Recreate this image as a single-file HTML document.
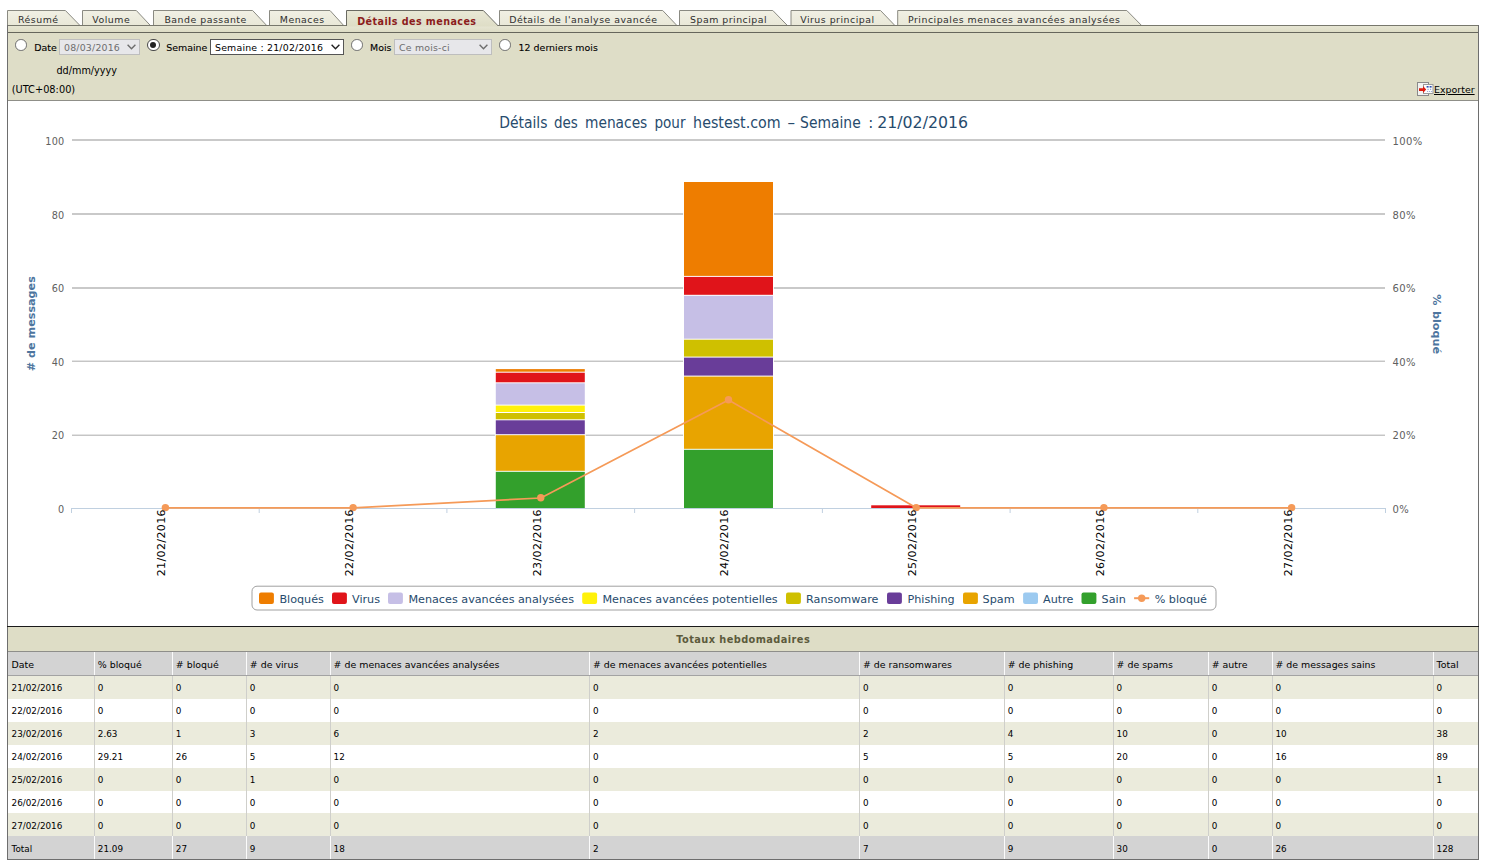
<!DOCTYPE html>
<html lang="fr"><head><meta charset="utf-8"><title>Détails des menaces</title>
<style>
html,body{margin:0;padding:0;background:#fff;}
body{width:1485px;height:861px;overflow:hidden;position:relative;font-family:"DejaVu Sans","Liberation Sans",sans-serif;font-size:9.45px;color:#000;}
.abs{position:absolute;}
.tab{position:absolute;top:13.6px;height:12px;line-height:12px;font-family:"DejaVu Sans","Liberation Sans",sans-serif;font-size:9.4px;letter-spacing:0.5px;color:#2e2e2e;white-space:nowrap;}
.tab.on{font-weight:bold;color:#8c1c1c;font-size:9.6px;letter-spacing:0.42px;top:15.8px;}
.tb{position:absolute;white-space:nowrap;line-height:12px;height:12px;}
.lb{-webkit-text-stroke:0.1px #000;}
.radio{position:absolute;width:9.6px;height:9.6px;border:1px solid #6e6e6e;border-radius:50%;background:#fff;}
.radio.on{border-color:#484848;}
.radio.on:after{content:"";position:absolute;left:2.1px;top:2.1px;width:6.2px;height:6.2px;border-radius:50%;background:#222;}
.sel{position:absolute;top:39px;height:14px;border:1px solid #bebebe;background:#e7e7ea;color:#6d6d6d;line-height:14px;white-space:nowrap;}
.sel.en{background:#fff;border-color:#555;color:#000;}
.sel span{position:absolute;left:4px;top:1.3px;font-size:9.4px;letter-spacing:0.2px;}
.sel svg{position:absolute;right:3.0px;top:3.6px;}
.th,.td{position:absolute;white-space:nowrap;line-height:12px;height:12px;}
.th{font-size:9.42px;}
.td{font-size:8.8px;}
</style></head>
<body>
<div class="abs" style="left:8px;top:26px;width:1470px;height:6px;background:linear-gradient(#e6e5d3,#dddcc5)"></div>
<div class="abs" style="left:8px;top:33px;width:1470px;height:67px;background:#deddc7"></div>
<div class="abs" style="left:8px;top:627px;width:1470px;height:24px;background:#deddc6"></div>
<svg class="abs" style="left:0;top:0" width="1485" height="110" viewBox="0 0 1485 110"><defs><linearGradient id="tg" x1="0" y1="0" x2="0" y2="1"><stop offset="0" stop-color="#f1f0e4"/><stop offset="1" stop-color="#e9e8d8"/></linearGradient><linearGradient id="ta" x1="0" y1="0" x2="0" y2="1"><stop offset="0" stop-color="#e9e8d6"/><stop offset="1" stop-color="#deddc6"/></linearGradient></defs><path d="M7.5 25.5 L7.5 10.5 L65.4 10.5 L80 25.5 Z" fill="url(#tg)" stroke="#8a8a82" stroke-width="1"/><path d="M82.5 25.5 L82.5 10.5 L136.3 10.5 L150.4 25.5 Z" fill="url(#tg)" stroke="#8a8a82" stroke-width="1"/><path d="M153.5 25.5 L153.5 10.5 L252.6 10.5 L266.7 25.5 Z" fill="url(#tg)" stroke="#8a8a82" stroke-width="1"/><path d="M269.5 25.5 L269.5 10.5 L330 10.5 L343.7 25.5 Z" fill="url(#tg)" stroke="#8a8a82" stroke-width="1"/><path d="M499.5 25.5 L499.5 10.5 L662.7 10.5 L676.9 25.5 Z" fill="url(#tg)" stroke="#8a8a82" stroke-width="1"/><path d="M679.5 25.5 L679.5 10.5 L772.8 10.5 L787.4 25.5 Z" fill="url(#tg)" stroke="#8a8a82" stroke-width="1"/><path d="M791.0 25.5 L791.0 10.5 L880.5 10.5 L894.9 25.5 Z" fill="url(#tg)" stroke="#8a8a82" stroke-width="1"/><path d="M897.7 25.5 L897.7 10.5 L1126.8 10.5 L1141.6 25.5 Z" fill="url(#tg)" stroke="#8a8a82" stroke-width="1"/><path d="M7 25.5 H1478.5" stroke="#77776c" stroke-width="1" fill="none"/><path d="M346.5 26.5 L346.5 10.5 L483.3 10.5 L498.3 26.5 Z" fill="url(#ta)" stroke="none"/><path d="M346.5 26 L346.5 10.5 L483.3 10.5 L497.8 25.5" fill="none" stroke="#6a6a62" stroke-width="1"/><path d="M7 32.5 H1478.5" stroke="#66665c" stroke-width="1" fill="none"/><path d="M7 100.5 H1478.5" stroke="#8f8f88" stroke-width="1" fill="none"/></svg>
<div class="abs" style="left:7px;top:25px;width:1px;height:834px;background:#6e6e6e"></div>
<div class="abs" style="left:1478px;top:25px;width:1px;height:834px;background:#6e6e6e"></div>
<div class="tab" style="left:18px">Résumé</div>
<div class="tab" style="left:92.3px">Volume</div>
<div class="tab" style="left:164.4px">Bande passante</div>
<div class="tab" style="left:279.8px">Menaces</div>
<div class="tab on" style="left:357.2px">Détails des menaces</div>
<div class="tab" style="left:509.2px">Détails de l'analyse avancée</div>
<div class="tab" style="left:690px">Spam principal</div>
<div class="tab" style="left:800.2px">Virus principal</div>
<div class="tab" style="left:908.0px">Principales menaces avancées analysées</div>
<div class="radio" style="left:15.2px;top:39.4px"></div>
<div class="tb lb" style="left:34.2px;top:42.0px">Date</div>
<div class="sel" style="left:59px;width:79px"><span>08/03/2016</span><svg width="9" height="6" viewBox="0 0 9 6"><path d="M0.6 0.8 L4.5 4.8 L8.4 0.8" fill="none" stroke="#6d6d6d" stroke-width="1.4"/></svg></div>
<div class="radio on" style="left:147.2px;top:39.0px;width:10.4px;height:10.4px"></div>
<div class="tb lb" style="left:166.2px;top:42.0px">Semaine</div>
<div class="sel en" style="left:210px;width:132px"><span>Semaine : 21/02/2016</span><svg width="9" height="6" viewBox="0 0 9 6"><path d="M0.6 0.8 L4.5 4.8 L8.4 0.8" fill="none" stroke="#222" stroke-width="1.4"/></svg></div>
<div class="radio" style="left:351.2px;top:39.2px"></div>
<div class="tb lb" style="left:370px;top:42.0px">Mois</div>
<div class="sel" style="left:394px;width:96px"><span>Ce mois-ci</span><svg width="9" height="6" viewBox="0 0 9 6"><path d="M0.6 0.8 L4.5 4.8 L8.4 0.8" fill="none" stroke="#6d6d6d" stroke-width="1.4"/></svg></div>
<div class="radio" style="left:499.2px;top:39.2px"></div>
<div class="tb lb" style="left:518.6px;top:42.0px">12 derniers mois</div>
<div class="tb" style="left:56.4px;top:65.4px;font-size:9.7px">dd/mm/yyyy</div>
<div class="tb" style="left:11.7px;top:84.3px;font-size:9.8px">(UTC+08:00)</div>
<svg class="abs" style="left:1417px;top:82px" width="17" height="14" viewBox="0 0 17 14">
<rect x="0.5" y="0.5" width="11" height="13" fill="#f2f2f0" stroke="#8a8a8a"/>
<rect x="6.5" y="2.5" width="9.5" height="9" fill="#fdfdfd" stroke="#9a9a9a"/>
<path d="M2 6.2 H6 V4 L9.2 7.5 L6 10.9 V8.9 H2 Z" fill="#dd1c10"/>
<rect x="9.6" y="4" width="2" height="1.6" fill="#2a50b0"/><rect x="12.6" y="4" width="2" height="1.6" fill="#2a50b0"/>
<rect x="10.5" y="6.8" width="1.2" height="1" fill="#7d93c8"/><rect x="13" y="6.8" width="1.2" height="1" fill="#7d93c8"/>
<rect x="10" y="9" width="1.2" height="1" fill="#9fb0d8"/><rect x="12" y="9" width="1.2" height="1" fill="#9fb0d8"/><rect x="14" y="9" width="1.2" height="1" fill="#9fb0d8"/>
</svg>
<div class="tb" style="left:1434px;top:84.3px;font-size:9.45px;text-decoration:underline;">Exporter</div>
<svg class="abs" style="left:0;top:0" width="1485" height="861" viewBox="0 0 1485 861" font-family="DejaVu Sans, Liberation Sans, sans-serif">
<text y="127.7" font-size="15" fill="#274b6d"><tspan x="499.2" textLength="48.3" lengthAdjust="spacingAndGlyphs">Détails</tspan> <tspan x="553.9" textLength="23.9" lengthAdjust="spacingAndGlyphs">des</tspan> <tspan x="585.0" textLength="62.3" lengthAdjust="spacingAndGlyphs">menaces</tspan> <tspan x="654.4" textLength="31.1" lengthAdjust="spacingAndGlyphs">pour</tspan> <tspan x="693.1" textLength="87.6" lengthAdjust="spacingAndGlyphs">hestest.com</tspan> <tspan x="787.5">–</tspan> <tspan x="800.1" textLength="60.6" lengthAdjust="spacingAndGlyphs">Semaine</tspan> <tspan x="868.3">:</tspan> <tspan x="877.2" textLength="90.9" lengthAdjust="spacingAndGlyphs">21/02/2016</tspan></text>
<rect x="72" y="139" width="1313.0" height="2" fill="#c9c9c9"/>
<rect x="72" y="213" width="1313.0" height="2" fill="#c9c9c9"/>
<rect x="72" y="287" width="1313.0" height="2" fill="#c9c9c9"/>
<rect x="72" y="360" width="1313.0" height="1" fill="#e4e4e4"/><rect x="72" y="361" width="1313.0" height="1" fill="#c5c5c5"/>
<rect x="72" y="434" width="1313.0" height="1" fill="#e4e4e4"/><rect x="72" y="435" width="1313.0" height="1" fill="#c5c5c5"/>
<rect x="71.0" y="508" width="1315.0" height="1" fill="#c0d0e0"/>
<rect x="71.0" y="508" width="1" height="5" fill="#c0d0e0"/>
<rect x="258.7" y="508" width="1" height="5" fill="#c0d0e0"/>
<rect x="446.4" y="508" width="1" height="5" fill="#c0d0e0"/>
<rect x="634.1" y="508" width="1" height="5" fill="#c0d0e0"/>
<rect x="821.9" y="508" width="1" height="5" fill="#c0d0e0"/>
<rect x="1009.6" y="508" width="1" height="5" fill="#c0d0e0"/>
<rect x="1197.3" y="508" width="1" height="5" fill="#c0d0e0"/>
<rect x="1385.0" y="508" width="1" height="5" fill="#c0d0e0"/>
<text x="64.4" y="144.9" text-anchor="end" font-size="9.7" letter-spacing="0.2" fill="#606060">100</text>
<text x="1392.6" y="144.9" text-anchor="start" font-size="10" letter-spacing="0.35" fill="#606060">100%</text>
<text x="64.4" y="218.8" text-anchor="end" font-size="9.7" letter-spacing="0.2" fill="#606060">80</text>
<text x="1392.6" y="218.8" text-anchor="start" font-size="10" letter-spacing="0.35" fill="#606060">80%</text>
<text x="64.4" y="291.8" text-anchor="end" font-size="9.7" letter-spacing="0.2" fill="#606060">60</text>
<text x="1392.6" y="291.8" text-anchor="start" font-size="10" letter-spacing="0.35" fill="#606060">60%</text>
<text x="64.4" y="365.6" text-anchor="end" font-size="9.7" letter-spacing="0.2" fill="#606060">40</text>
<text x="1392.6" y="365.6" text-anchor="start" font-size="10" letter-spacing="0.35" fill="#606060">40%</text>
<text x="64.4" y="439.2" text-anchor="end" font-size="9.7" letter-spacing="0.2" fill="#606060">20</text>
<text x="1392.6" y="439.2" text-anchor="start" font-size="10" letter-spacing="0.35" fill="#606060">20%</text>
<text x="64.4" y="512.9" text-anchor="end" font-size="9.7" letter-spacing="0.2" fill="#606060">0</text>
<text x="1392.6" y="512.9" text-anchor="start" font-size="10" letter-spacing="0.35" fill="#606060">0%</text>
<text transform="translate(35.0,323.7) rotate(-90)" text-anchor="middle" font-size="11.2" font-weight="bold" fill="#4d759e"># de messages</text>
<text transform="translate(1432.8,324.1) rotate(90)" text-anchor="middle" font-size="11.2" word-spacing="1.7" font-weight="bold" fill="#4d759e">% bloqué</text>
<rect x="494.89" y="367.80" width="90.80" height="140.20" fill="#fff"/>
<rect x="495.79" y="369.10" width="89.00" height="2.60" fill="#ee7d00"/>
<rect x="495.79" y="372.70" width="89.00" height="9.60" fill="#e0141a"/>
<rect x="495.79" y="383.30" width="89.00" height="21.30" fill="#c6bfe6"/>
<rect x="495.79" y="405.60" width="89.00" height="6.40" fill="#fff10a"/>
<rect x="495.79" y="413.00" width="89.00" height="6.30" fill="#cfc000"/>
<rect x="495.79" y="420.30" width="89.00" height="13.90" fill="#693d99"/>
<rect x="495.79" y="435.20" width="89.00" height="35.60" fill="#e8a400"/>
<rect x="495.79" y="471.80" width="89.00" height="36.20" fill="#33a02c"/>
<rect x="683.10" y="180.70" width="90.80" height="327.30" fill="#fff"/>
<rect x="684.00" y="182.00" width="89.00" height="93.90" fill="#ee7d00"/>
<rect x="684.00" y="276.90" width="89.00" height="17.90" fill="#e0141a"/>
<rect x="684.00" y="295.80" width="89.00" height="42.90" fill="#c6bfe6"/>
<rect x="684.00" y="339.70" width="89.00" height="16.90" fill="#cfc000"/>
<rect x="684.00" y="357.60" width="89.00" height="18.00" fill="#693d99"/>
<rect x="684.00" y="376.60" width="89.00" height="72.20" fill="#e8a400"/>
<rect x="684.00" y="449.80" width="89.00" height="58.20" fill="#33a02c"/>
<rect x="870.31" y="504.00" width="90.80" height="4.00" fill="#fff"/>
<rect x="871.21" y="505.30" width="89.00" height="2.70" fill="#e0141a"/>
<clipPath id="pc"><rect x="71.5" y="139" width="1314.0" height="370.2"/></clipPath>
<polyline clip-path="url(#pc)" points="165.4,507.8 353.1,507.8 540.8,498.0 728.5,400.0 916.2,507.8 1103.9,507.8 1291.6,507.8" fill="none" stroke="#f59a58" stroke-width="1.7" stroke-linejoin="round" stroke-linecap="round"/>
<circle cx="165.4" cy="507.6" r="3.7" fill="#f59a58"/>
<circle cx="353.1" cy="507.6" r="3.7" fill="#f59a58"/>
<circle cx="540.8" cy="497.8" r="3.7" fill="#f59a58"/>
<circle cx="728.5" cy="399.8" r="3.7" fill="#f59a58"/>
<circle cx="916.2" cy="507.6" r="3.7" fill="#f59a58"/>
<circle cx="1103.9" cy="507.6" r="3.7" fill="#f59a58"/>
<circle cx="1291.6" cy="507.6" r="3.7" fill="#f59a58"/>
<text transform="translate(165.3,509.1) rotate(-90)" text-anchor="end" font-size="11" letter-spacing="0.38" fill="#000">21/02/2016</text>
<text transform="translate(353.0,509.1) rotate(-90)" text-anchor="end" font-size="11" letter-spacing="0.38" fill="#000">22/02/2016</text>
<text transform="translate(540.7,509.1) rotate(-90)" text-anchor="end" font-size="11" letter-spacing="0.38" fill="#000">23/02/2016</text>
<text transform="translate(728.4,509.1) rotate(-90)" text-anchor="end" font-size="11" letter-spacing="0.38" fill="#000">24/02/2016</text>
<text transform="translate(916.1,509.1) rotate(-90)" text-anchor="end" font-size="11" letter-spacing="0.38" fill="#000">25/02/2016</text>
<text transform="translate(1103.8,509.1) rotate(-90)" text-anchor="end" font-size="11" letter-spacing="0.38" fill="#000">26/02/2016</text>
<text transform="translate(1291.5,509.1) rotate(-90)" text-anchor="end" font-size="11" letter-spacing="0.38" fill="#000">27/02/2016</text>
<rect x="252" y="586.2" width="964" height="23.8" rx="5" ry="5" fill="#fff" stroke="#a0a0a0" stroke-width="1"/>
<rect x="259" y="592.4" width="14.9" height="11.6" rx="2" ry="2" fill="#ee7d00"/>
<text x="279.4" y="603.1" font-size="11.2" fill="#274b6d">Bloqués</text>
<rect x="332" y="592.4" width="14.9" height="11.6" rx="2" ry="2" fill="#e0141a"/>
<text x="352" y="603.1" font-size="11.2" fill="#274b6d">Virus</text>
<rect x="388" y="592.4" width="14.9" height="11.6" rx="2" ry="2" fill="#c6bfe6"/>
<text x="408.4" y="603.1" font-size="11.2" fill="#274b6d">Menaces avancées analysées</text>
<rect x="582.2" y="592.4" width="14.9" height="11.6" rx="2" ry="2" fill="#fff10a"/>
<text x="602.4" y="603.1" font-size="11.2" fill="#274b6d">Menaces avancées potentielles</text>
<rect x="786" y="592.4" width="14.9" height="11.6" rx="2" ry="2" fill="#cfc000"/>
<text x="806.1" y="603.1" font-size="11.2" fill="#274b6d">Ransomware</text>
<rect x="887" y="592.4" width="14.9" height="11.6" rx="2" ry="2" fill="#693d99"/>
<text x="907.5" y="603.1" font-size="11.2" fill="#274b6d">Phishing</text>
<rect x="963" y="592.4" width="14.9" height="11.6" rx="2" ry="2" fill="#e8a400"/>
<text x="982.6" y="603.1" font-size="11.2" fill="#274b6d">Spam</text>
<rect x="1023.1" y="592.4" width="14.9" height="11.6" rx="2" ry="2" fill="#9ccaf0"/>
<text x="1043" y="603.1" font-size="11.2" fill="#274b6d">Autre</text>
<rect x="1081.5" y="592.4" width="14.9" height="11.6" rx="2" ry="2" fill="#33a02c"/>
<text x="1101.6" y="603.1" font-size="11.2" fill="#274b6d">Sain</text>
<path d="M1134.1 598.2 H1149.2" stroke="#f59a58" stroke-width="2" fill="none"/><circle cx="1141.7" cy="598.2" r="3.7" fill="#f59a58"/>
<text x="1154.7" y="603.1" font-size="11.2" fill="#274b6d">% bloqué</text>
</svg>
<div class="abs" style="left:7px;top:626px;width:1472px;height:1px;background:#1a1a1a"></div>
<div class="abs" style="left:8px;top:634.3px;width:1470.4px;text-align:center;font-family:'DejaVu Sans','Liberation Sans',sans-serif;font-weight:bold;font-size:9.8px;letter-spacing:0.42px;line-height:12px;color:#5c5a3c;">Totaux hebdomadaires</div>
<div class="abs" style="left:8px;top:651px;width:1470px;height:1px;background:#8e8e8a"></div>
<div class="abs" style="left:8px;top:652px;width:1470px;height:23px;background:#d3d3d3"></div>
<div class="abs" style="left:8px;top:675px;width:1470px;height:1px;background:#a3a3a3"></div>
<div class="abs" style="left:8px;top:676.00px;width:1470px;height:23.05px;background:#ebebdc"></div>
<div class="abs" style="left:8px;top:699.00px;width:1470px;height:23.05px;background:#ffffff"></div>
<div class="abs" style="left:8px;top:722.00px;width:1470px;height:23.05px;background:#ebebdc"></div>
<div class="abs" style="left:8px;top:745.00px;width:1470px;height:23.05px;background:#ffffff"></div>
<div class="abs" style="left:8px;top:768.00px;width:1470px;height:22.85px;background:#ebebdc"></div>
<div class="abs" style="left:8px;top:790.80px;width:1470px;height:22.65px;background:#ffffff"></div>
<div class="abs" style="left:8px;top:813.40px;width:1470px;height:23.05px;background:#ebebdc"></div>
<div class="abs" style="left:8px;top:836.40px;width:1470px;height:22.45px;background:#d3d3d3"></div>
<div class="abs" style="left:94.0px;top:652px;width:1.2px;height:23px;background:#fbfbfb"></div>
<div class="abs" style="left:94.0px;top:676px;width:1.2px;height:160.4px;background:#cfcfcb"></div>
<div class="abs" style="left:94.0px;top:836.4px;width:1.2px;height:22.4px;background:#fbfbfb"></div>
<div class="abs" style="left:172.0px;top:652px;width:1.2px;height:23px;background:#fbfbfb"></div>
<div class="abs" style="left:172.0px;top:676px;width:1.2px;height:160.4px;background:#cfcfcb"></div>
<div class="abs" style="left:172.0px;top:836.4px;width:1.2px;height:22.4px;background:#fbfbfb"></div>
<div class="abs" style="left:246.0px;top:652px;width:1.2px;height:23px;background:#fbfbfb"></div>
<div class="abs" style="left:246.0px;top:676px;width:1.2px;height:160.4px;background:#cfcfcb"></div>
<div class="abs" style="left:246.0px;top:836.4px;width:1.2px;height:22.4px;background:#fbfbfb"></div>
<div class="abs" style="left:329.8px;top:652px;width:1.2px;height:23px;background:#fbfbfb"></div>
<div class="abs" style="left:329.8px;top:676px;width:1.2px;height:160.4px;background:#cfcfcb"></div>
<div class="abs" style="left:329.8px;top:836.4px;width:1.2px;height:22.4px;background:#fbfbfb"></div>
<div class="abs" style="left:589.1px;top:652px;width:1.2px;height:23px;background:#fbfbfb"></div>
<div class="abs" style="left:589.1px;top:676px;width:1.2px;height:160.4px;background:#cfcfcb"></div>
<div class="abs" style="left:589.1px;top:836.4px;width:1.2px;height:22.4px;background:#fbfbfb"></div>
<div class="abs" style="left:859.2px;top:652px;width:1.2px;height:23px;background:#fbfbfb"></div>
<div class="abs" style="left:859.2px;top:676px;width:1.2px;height:160.4px;background:#cfcfcb"></div>
<div class="abs" style="left:859.2px;top:836.4px;width:1.2px;height:22.4px;background:#fbfbfb"></div>
<div class="abs" style="left:1003.9px;top:652px;width:1.2px;height:23px;background:#fbfbfb"></div>
<div class="abs" style="left:1003.9px;top:676px;width:1.2px;height:160.4px;background:#cfcfcb"></div>
<div class="abs" style="left:1003.9px;top:836.4px;width:1.2px;height:22.4px;background:#fbfbfb"></div>
<div class="abs" style="left:1112.8px;top:652px;width:1.2px;height:23px;background:#fbfbfb"></div>
<div class="abs" style="left:1112.8px;top:676px;width:1.2px;height:160.4px;background:#cfcfcb"></div>
<div class="abs" style="left:1112.8px;top:836.4px;width:1.2px;height:22.4px;background:#fbfbfb"></div>
<div class="abs" style="left:1207.9px;top:652px;width:1.2px;height:23px;background:#fbfbfb"></div>
<div class="abs" style="left:1207.9px;top:676px;width:1.2px;height:160.4px;background:#cfcfcb"></div>
<div class="abs" style="left:1207.9px;top:836.4px;width:1.2px;height:22.4px;background:#fbfbfb"></div>
<div class="abs" style="left:1271.7px;top:652px;width:1.2px;height:23px;background:#fbfbfb"></div>
<div class="abs" style="left:1271.7px;top:676px;width:1.2px;height:160.4px;background:#cfcfcb"></div>
<div class="abs" style="left:1271.7px;top:836.4px;width:1.2px;height:22.4px;background:#fbfbfb"></div>
<div class="abs" style="left:1432.8px;top:652px;width:1.2px;height:23px;background:#fbfbfb"></div>
<div class="abs" style="left:1432.8px;top:676px;width:1.2px;height:160.4px;background:#cfcfcb"></div>
<div class="abs" style="left:1432.8px;top:836.4px;width:1.2px;height:22.4px;background:#fbfbfb"></div>
<div class="abs" style="left:7px;top:858.6px;width:1472px;height:1.2px;background:#6e6e6e"></div>
<div class="th" style="left:11.6px;top:659.0px">Date</div>
<div class="th" style="left:97.8px;top:659.0px">% bloqué</div>
<div class="th" style="left:175.8px;top:659.0px"># bloqué</div>
<div class="th" style="left:249.8px;top:659.0px"># de virus</div>
<div class="th" style="left:333.6px;top:659.0px"># de menaces avancées analysées</div>
<div class="th" style="left:592.9px;top:659.0px"># de menaces avancées potentielles</div>
<div class="th" style="left:863.0px;top:659.0px"># de ransomwares</div>
<div class="th" style="left:1007.7px;top:659.0px"># de phishing</div>
<div class="th" style="left:1116.6px;top:659.0px"># de spams</div>
<div class="th" style="left:1211.7px;top:659.0px"># autre</div>
<div class="th" style="left:1275.5px;top:659.0px"># de messages sains</div>
<div class="th" style="left:1436.6px;top:659.0px">Total</div>
<div class="td" style="left:11.6px;top:682.00px">21/02/2016</div>
<div class="td" style="left:97.8px;top:682.00px">0</div>
<div class="td" style="left:175.8px;top:682.00px">0</div>
<div class="td" style="left:249.8px;top:682.00px">0</div>
<div class="td" style="left:333.6px;top:682.00px">0</div>
<div class="td" style="left:592.9px;top:682.00px">0</div>
<div class="td" style="left:863.0px;top:682.00px">0</div>
<div class="td" style="left:1007.7px;top:682.00px">0</div>
<div class="td" style="left:1116.6px;top:682.00px">0</div>
<div class="td" style="left:1211.7px;top:682.00px">0</div>
<div class="td" style="left:1275.5px;top:682.00px">0</div>
<div class="td" style="left:1436.6px;top:682.00px">0</div>
<div class="td" style="left:11.6px;top:705.40px">22/02/2016</div>
<div class="td" style="left:97.8px;top:705.40px">0</div>
<div class="td" style="left:175.8px;top:705.40px">0</div>
<div class="td" style="left:249.8px;top:705.40px">0</div>
<div class="td" style="left:333.6px;top:705.40px">0</div>
<div class="td" style="left:592.9px;top:705.40px">0</div>
<div class="td" style="left:863.0px;top:705.40px">0</div>
<div class="td" style="left:1007.7px;top:705.40px">0</div>
<div class="td" style="left:1116.6px;top:705.40px">0</div>
<div class="td" style="left:1211.7px;top:705.40px">0</div>
<div class="td" style="left:1275.5px;top:705.40px">0</div>
<div class="td" style="left:1436.6px;top:705.40px">0</div>
<div class="td" style="left:11.6px;top:728.30px">23/02/2016</div>
<div class="td" style="left:97.8px;top:728.30px">2.63</div>
<div class="td" style="left:175.8px;top:728.30px">1</div>
<div class="td" style="left:249.8px;top:728.30px">3</div>
<div class="td" style="left:333.6px;top:728.30px">6</div>
<div class="td" style="left:592.9px;top:728.30px">2</div>
<div class="td" style="left:863.0px;top:728.30px">2</div>
<div class="td" style="left:1007.7px;top:728.30px">4</div>
<div class="td" style="left:1116.6px;top:728.30px">10</div>
<div class="td" style="left:1211.7px;top:728.30px">0</div>
<div class="td" style="left:1275.5px;top:728.30px">10</div>
<div class="td" style="left:1436.6px;top:728.30px">38</div>
<div class="td" style="left:11.6px;top:750.50px">24/02/2016</div>
<div class="td" style="left:97.8px;top:750.50px">29.21</div>
<div class="td" style="left:175.8px;top:750.50px">26</div>
<div class="td" style="left:249.8px;top:750.50px">5</div>
<div class="td" style="left:333.6px;top:750.50px">12</div>
<div class="td" style="left:592.9px;top:750.50px">0</div>
<div class="td" style="left:863.0px;top:750.50px">5</div>
<div class="td" style="left:1007.7px;top:750.50px">5</div>
<div class="td" style="left:1116.6px;top:750.50px">20</div>
<div class="td" style="left:1211.7px;top:750.50px">0</div>
<div class="td" style="left:1275.5px;top:750.50px">16</div>
<div class="td" style="left:1436.6px;top:750.50px">89</div>
<div class="td" style="left:11.6px;top:773.80px">25/02/2016</div>
<div class="td" style="left:97.8px;top:773.80px">0</div>
<div class="td" style="left:175.8px;top:773.80px">0</div>
<div class="td" style="left:249.8px;top:773.80px">1</div>
<div class="td" style="left:333.6px;top:773.80px">0</div>
<div class="td" style="left:592.9px;top:773.80px">0</div>
<div class="td" style="left:863.0px;top:773.80px">0</div>
<div class="td" style="left:1007.7px;top:773.80px">0</div>
<div class="td" style="left:1116.6px;top:773.80px">0</div>
<div class="td" style="left:1211.7px;top:773.80px">0</div>
<div class="td" style="left:1275.5px;top:773.80px">0</div>
<div class="td" style="left:1436.6px;top:773.80px">1</div>
<div class="td" style="left:11.6px;top:796.70px">26/02/2016</div>
<div class="td" style="left:97.8px;top:796.70px">0</div>
<div class="td" style="left:175.8px;top:796.70px">0</div>
<div class="td" style="left:249.8px;top:796.70px">0</div>
<div class="td" style="left:333.6px;top:796.70px">0</div>
<div class="td" style="left:592.9px;top:796.70px">0</div>
<div class="td" style="left:863.0px;top:796.70px">0</div>
<div class="td" style="left:1007.7px;top:796.70px">0</div>
<div class="td" style="left:1116.6px;top:796.70px">0</div>
<div class="td" style="left:1211.7px;top:796.70px">0</div>
<div class="td" style="left:1275.5px;top:796.70px">0</div>
<div class="td" style="left:1436.6px;top:796.70px">0</div>
<div class="td" style="left:11.6px;top:819.80px">27/02/2016</div>
<div class="td" style="left:97.8px;top:819.80px">0</div>
<div class="td" style="left:175.8px;top:819.80px">0</div>
<div class="td" style="left:249.8px;top:819.80px">0</div>
<div class="td" style="left:333.6px;top:819.80px">0</div>
<div class="td" style="left:592.9px;top:819.80px">0</div>
<div class="td" style="left:863.0px;top:819.80px">0</div>
<div class="td" style="left:1007.7px;top:819.80px">0</div>
<div class="td" style="left:1116.6px;top:819.80px">0</div>
<div class="td" style="left:1211.7px;top:819.80px">0</div>
<div class="td" style="left:1275.5px;top:819.80px">0</div>
<div class="td" style="left:1436.6px;top:819.80px">0</div>
<div class="td" style="left:11.6px;top:842.70px">Total</div>
<div class="td" style="left:97.8px;top:842.70px">21.09</div>
<div class="td" style="left:175.8px;top:842.70px">27</div>
<div class="td" style="left:249.8px;top:842.70px">9</div>
<div class="td" style="left:333.6px;top:842.70px">18</div>
<div class="td" style="left:592.9px;top:842.70px">2</div>
<div class="td" style="left:863.0px;top:842.70px">7</div>
<div class="td" style="left:1007.7px;top:842.70px">9</div>
<div class="td" style="left:1116.6px;top:842.70px">30</div>
<div class="td" style="left:1211.7px;top:842.70px">0</div>
<div class="td" style="left:1275.5px;top:842.70px">26</div>
<div class="td" style="left:1436.6px;top:842.70px">128</div>
</body></html>
